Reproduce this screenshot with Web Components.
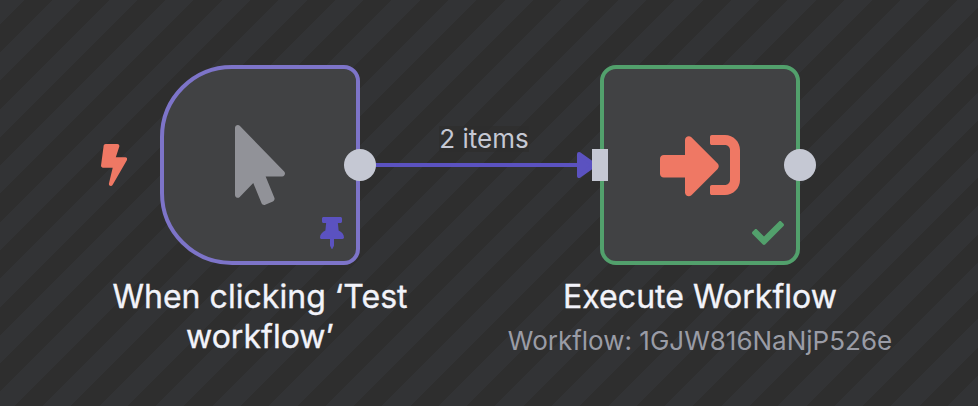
<!DOCTYPE html>
<html lang="en">
<head>
<meta charset="utf-8">
<title>Workflow</title>
<style>html,body{margin:0;height:100%;overflow:hidden;background:#2e2e2e}</style>
</head>
<body>
<workflow-canvas>
  <workflow-edge label="2 items"></workflow-edge>
  <workflow-node class="trigger" style="left:160px;top:65px" label="When clicking ‘Test workflow’" icon="pointer" status="pin" trigger></workflow-node>
  <workflow-node style="left:600px;top:65px" label="Execute Workflow" subtitle="Workflow: 1GJW816NaNjP526e" icon="signin" status="check"></workflow-node>
</workflow-canvas>
<script>
const ICONS = {
  pointer: [320, 'M302.189 329.126H196.105l55.831 135.993c3.889 9.428-.555 19.999-9.444 23.999l-49.165 21.427c-9.165 4-19.443-.571-23.332-9.714l-53.053-129.136-86.664 89.138C18.729 472.71 0 463.554 0 447.977V18.299C0 1.899 19.921-6.096 30.277 5.443l284.412 292.542c11.472 11.179 3.007 31.141-12.5 31.141z'],
  bolt: [320, 'M296 160H180.6l42.6-129.8C227.2 15 215.7 0 200 0H56C44 0 33.8 8.9 32.2 20.8l-32 240C-1.7 275.2 9.5 288 24 288h118.7L96.6 482.5c-3.6 15.2 8 29.5 23.3 29.5 8.4 0 16.4-4.4 20.8-12l176-304c9.3-15.9-2.2-36-20.7-36z'],
  pin: [384, 'M298.028 214.267L285.793 96H328c13.255 0 24-10.745 24-24V24c0-13.255-10.745-24-24-24H56C42.745 0 32 10.745 32 24v48c0 13.255 10.745 24 24 24h42.207L85.972 214.267C37.465 236.82 0 277.261 0 328c0 13.255 10.745 24 24 24h136v104.007c0 1.242.289 2.467.845 3.578l24 48c2.941 5.882 11.364 5.893 14.311 0l24-48a8.008 8.008 0 0 0 .845-3.578V352h136c13.255 0 24-10.745 24-24-.001-51.183-37.983-91.42-85.973-113.733z'],
  check: [512, 'M173.898 439.404l-166.4-166.4c-9.997-9.997-9.997-26.206 0-36.204l36.203-36.204c9.997-9.998 26.207-9.998 36.204 0L192 312.69 432.095 72.596c9.997-9.997 26.207-9.997 36.204 0l36.203 36.204c9.997 9.997 9.997 26.206 0 36.204l-294.4 294.401c-9.998 9.997-26.207 9.997-36.204-.001z'],
  signin: [512, 'M416 448h-84c-6.6 0-12-5.4-12-12v-40c0-6.6 5.4-12 12-12h84c17.7 0 32-14.3 32-32V160c0-17.7-14.3-32-32-32h-84c-6.6 0-12-5.4-12-12V76c0-6.6 5.4-12 12-12h84c53 0 96 43 96 96v192c0 53-43 96-96 96zm-47-201L201 79c-15-15-41-4.5-41 17v96H24c-13.3 0-24 10.7-24 24v96c0 13.3 10.7 24 24 24h136v96c0 21.5 26 32 41 17l168-168c9.3-9.4 9.3-24.6 0-34z']
};

customElements.define('workflow-canvas', class extends HTMLElement {
  constructor() {
    super();
    this.attachShadow({mode: 'open'}).innerHTML = `<style>
      :host{display:block;position:relative;width:978px;height:406px;overflow:hidden;font-family:Inter,sans-serif;
        background:repeating-linear-gradient(135deg,#323335 0 17.1px,#2e2e2e 17.1px 37.1px,#323335 37.1px 40px)}
    </style><slot></slot>`;
  }
});

customElements.define('node-icon', class extends HTMLElement {
  connectedCallback() {
    const [w, d] = ICONS[this.getAttribute('name')];
    this.attachShadow({mode: 'open'}).innerHTML = `<style>
      :host{display:block}svg{display:block;height:100%;fill:currentColor}
    </style><svg viewBox="0 0 ${w} 512"><path d="${d}"/></svg>`;
  }
});

customElements.define('workflow-edge', class extends HTMLElement {
  connectedCallback() {
    this.attachShadow({mode: 'open'}).innerHTML = `<style>
      :host{display:block;position:absolute;left:360px;top:125px;width:240px;height:60px}
      svg{position:absolute;inset:0}
      span{position:absolute;left:79px;top:1px;width:90px;height:26px;line-height:26px;text-align:center;white-space:nowrap;
        font-size:26px;color:#c5c8d3;background:rgba(46,46,46,.7)}
    </style><svg width="240" height="60"><path d="M0 40H230" stroke="#5b52c0" stroke-width="4"/>
      <path d="M219 29L234.500 40L219 51Z" fill="#5b52c0" stroke="#5b52c0" stroke-width="4" stroke-linejoin="round"/></svg>
      <span>${this.getAttribute('label')}</span>`;
  }
});

customElements.define('workflow-node', class extends HTMLElement {
  connectedCallback() {
    const a = n => this.getAttribute(n);
    const trig = this.hasAttribute('trigger');
    this.attachShadow({mode: 'open'}).innerHTML = `<style>
      :host{display:block;position:absolute;width:200px;--line:#52a06c}
      :host([trigger]){--line:#7d74c9}
      .box{box-sizing:border-box;position:relative;width:200px;height:200px;border:4px solid var(--line);border-radius:16px;
        background:#414244;display:flex;align-items:center;justify-content:center}
      :host([trigger]) .box{border-radius:72px 16px 16px 72px}
      .main{height:80px;color:#ef7864}
      :host([trigger]) .main{color:#919298}
      .status{position:absolute;right:12px;bottom:12px;height:32px;color:#52a06c}
      :host([trigger]) .status{color:#5b52c0}
      .bolt{position:absolute;left:-63px;top:75px;height:42px;color:#ef7864}
      .out{position:absolute;left:180px;top:80px;width:32px;height:32px;border-radius:50%;background:#c5c8d3}
      .in{position:absolute;left:-12px;top:80px;width:16px;height:32px;background:#c5c8d3}
      .text{width:400px;margin:12px 0 0 -100px;display:flex;flex-direction:column;align-items:center;text-align:center}
      .title{max-width:384px;font-size:32px;line-height:40px;font-weight:400;letter-spacing:.04px;-webkit-text-stroke:.35px #f2f3fa;color:#f2f3fa}
      :host([trigger]) .title{max-width:320px}
      .sub{font-size:26px;line-height:32px;margin-top:8px;color:#9a9ca6;white-space:nowrap}
    </style>
    <div class="box">
      <node-icon class="main" name="${a('icon')}"></node-icon>
      <node-icon class="status" name="${a('status')}"></node-icon>
      ${trig ? '<node-icon class="bolt" name="bolt"></node-icon>' : '<div class="in"></div>'}
      <div class="out"></div>
    </div>
    <div class="text"><div class="title">${a('label')}</div>
      ${a('subtitle') ? `<div class="sub">${a('subtitle')}</div>` : ''}</div>`;
  }
});
</script>
</body>
</html>
